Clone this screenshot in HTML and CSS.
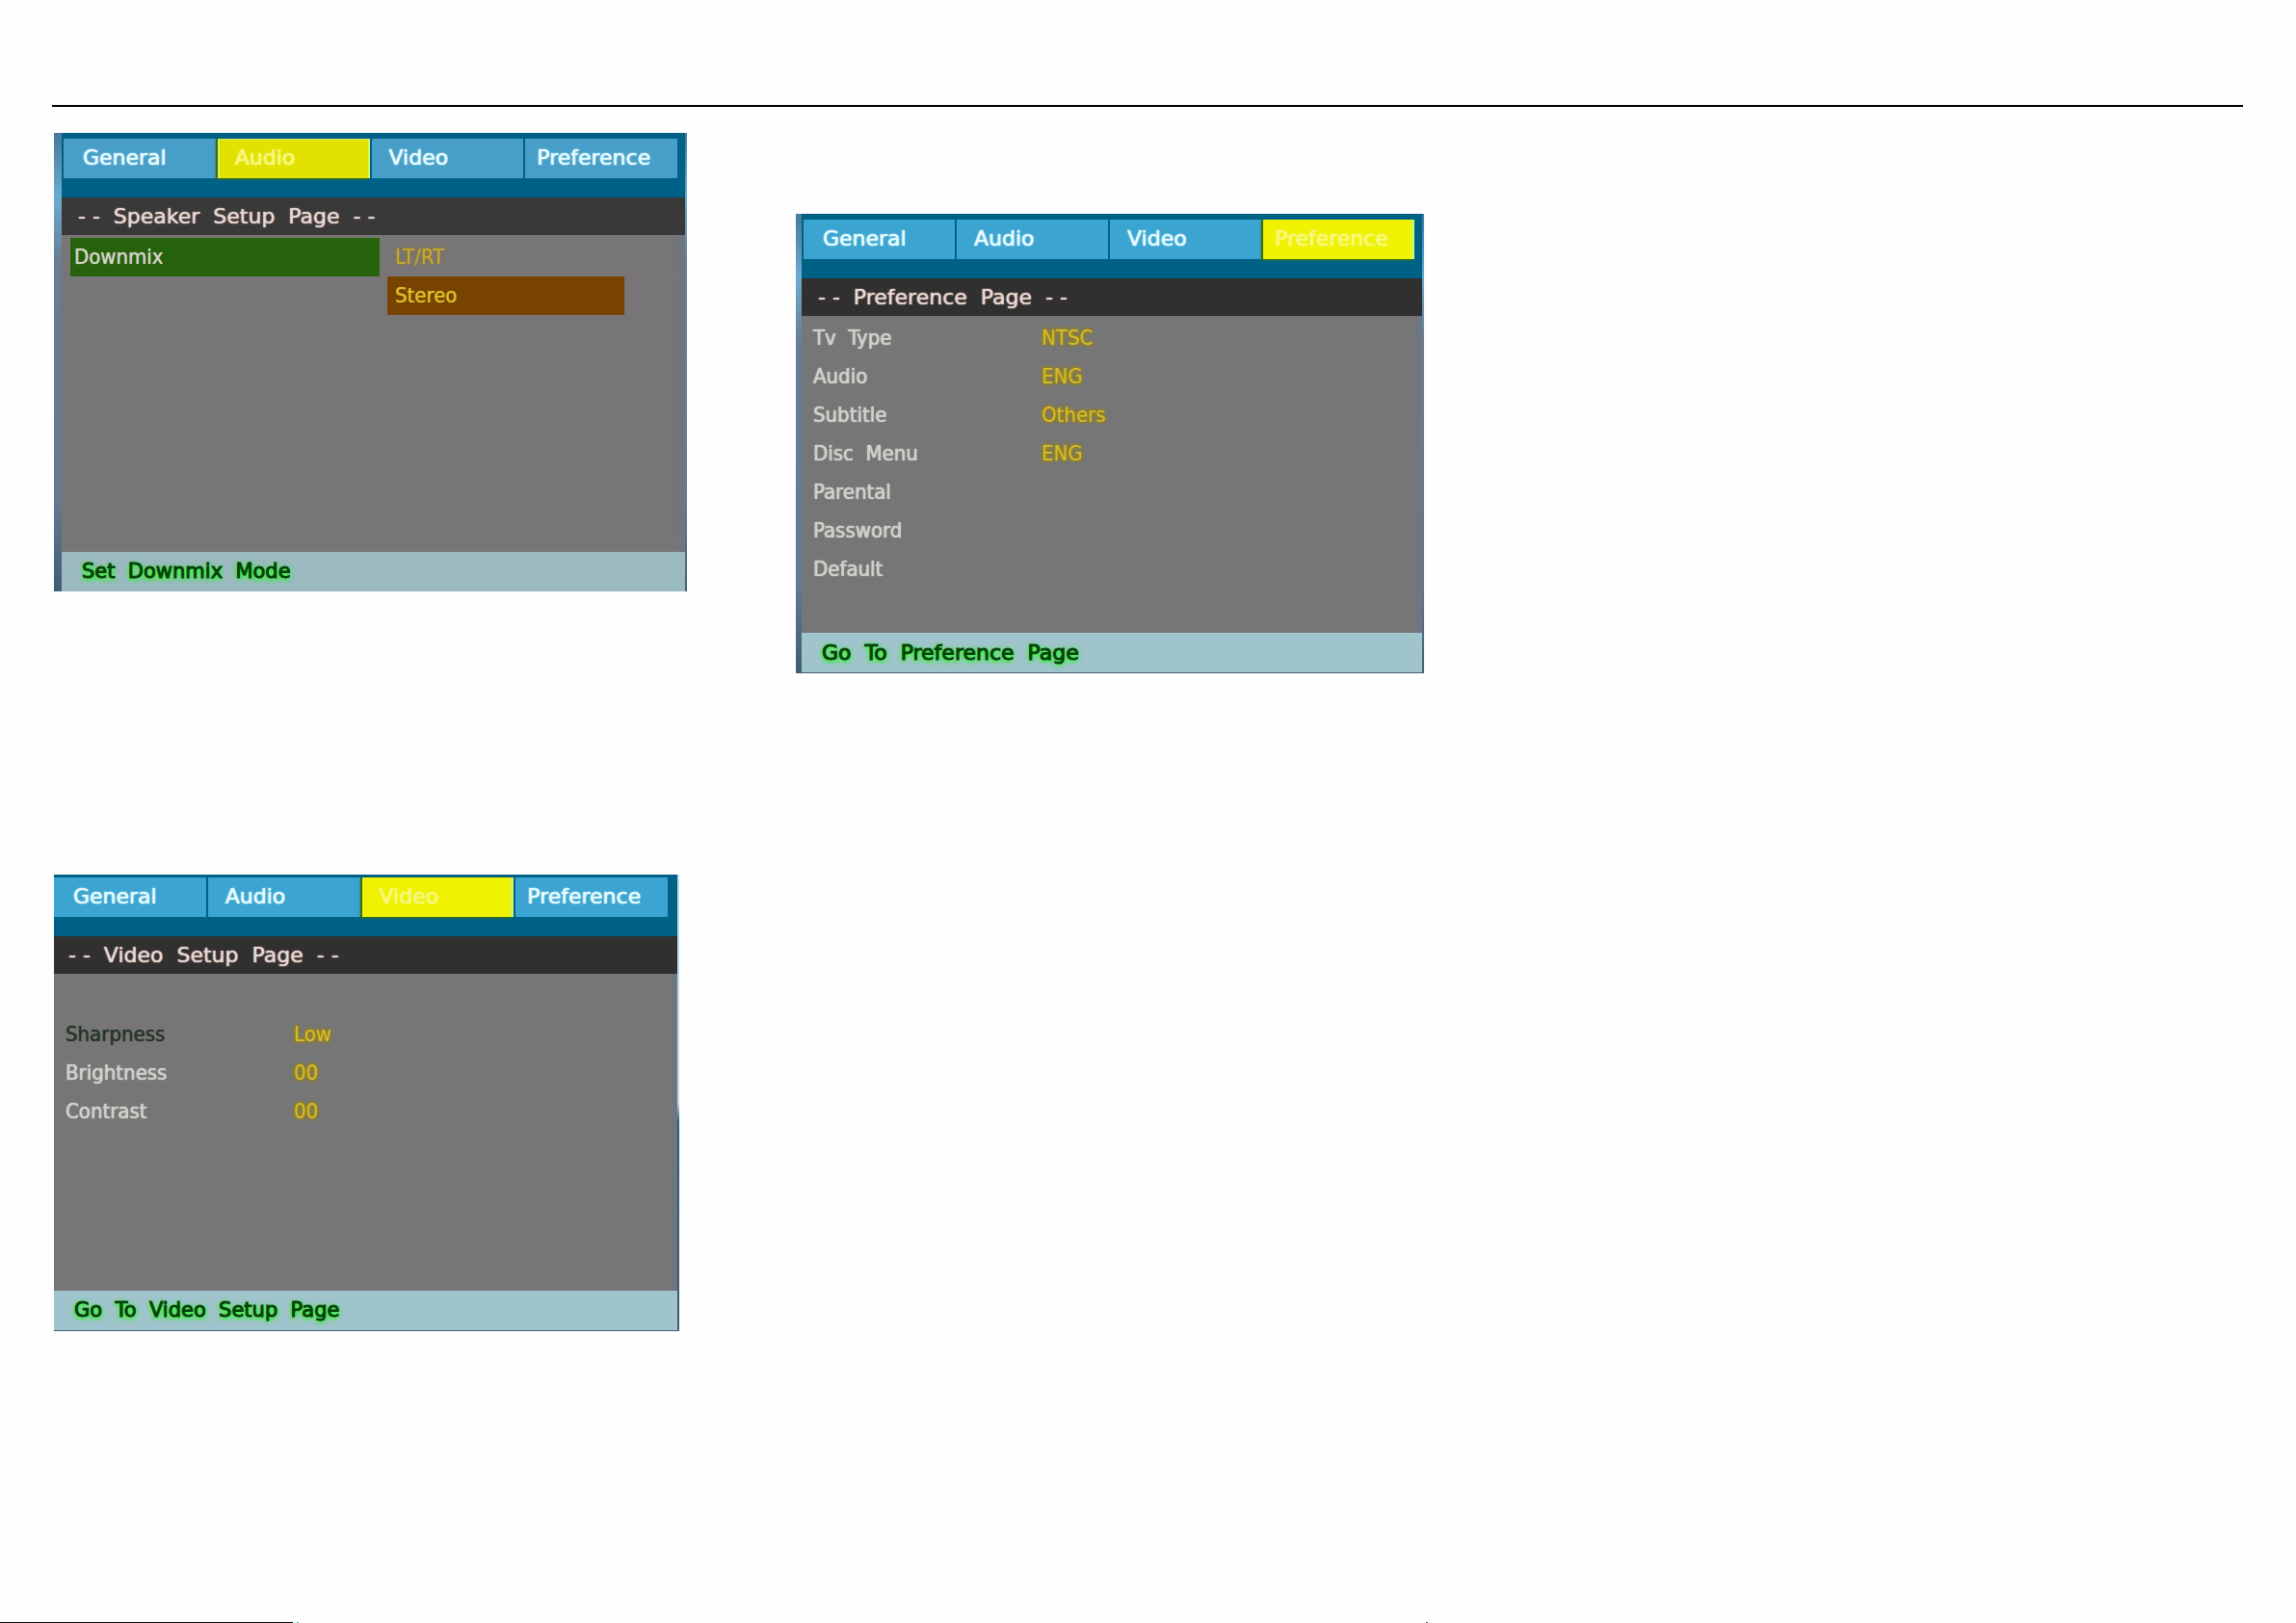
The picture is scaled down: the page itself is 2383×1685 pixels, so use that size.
FILE: index.html
```
<!DOCTYPE html>
<html lang="en">
<head>
<meta charset="utf-8">
<title>Setup pages</title>
<link rel="stylesheet" href="styles.css">
</head>
<body>
<main class="sheet">
  <hr class="rule">
  <div class="columns">
    <div class="column">
      <section class="screen speaker">
        <nav class="tabs">
          <button class="tab" type="button">General</button>
          <button class="tab active" type="button">Audio</button>
          <button class="tab" type="button">Video</button>
          <button class="tab" type="button">Preference</button>
        </nav>
        <h2 class="title">- -  Speaker  Setup  Page  - -</h2>
        <div class="content chooser">
          <div class="selected">Downmix</div>
          <div class="options">
            <button class="option" type="button">LT/RT</button>
            <button class="option current" type="button">Stereo</button>
          </div>
        </div>
        <p class="hint">Set  Downmix  Mode</p>
      </section>

      <section class="screen video">
        <nav class="tabs">
          <button class="tab" type="button">General</button>
          <button class="tab" type="button">Audio</button>
          <button class="tab active" type="button">Video</button>
          <button class="tab" type="button">Preference</button>
        </nav>
        <h2 class="title">- -  Video  Setup  Page  - -</h2>
        <div class="content">
          <table class="settings">
            <tr class="focused"><th scope="row">Sharpness</th><td>Low</td></tr>
            <tr><th scope="row">Brightness</th><td>00</td></tr>
            <tr><th scope="row">Contrast</th><td>00</td></tr>
          </table>
        </div>
        <p class="hint">Go  To  Video  Setup  Page</p>
      </section>
    </div>

    <div class="column second">
      <section class="screen preference">
        <nav class="tabs">
          <button class="tab" type="button">General</button>
          <button class="tab" type="button">Audio</button>
          <button class="tab" type="button">Video</button>
          <button class="tab active" type="button">Preference</button>
        </nav>
        <h2 class="title">- -  Preference  Page  - -</h2>
        <div class="content">
          <table class="settings">
            <tr><th scope="row">Tv  Type</th><td>NTSC</td></tr>
            <tr><th scope="row">Audio</th><td>ENG</td></tr>
            <tr><th scope="row">Subtitle</th><td>Others</td></tr>
            <tr><th scope="row">Disc  Menu</th><td>ENG</td></tr>
            <tr><th scope="row">Parental</th><td></td></tr>
            <tr><th scope="row">Password</th><td></td></tr>
            <tr><th scope="row">Default</th><td></td></tr>
          </table>
        </div>
        <p class="hint">Go  To  Preference  Page</p>
      </section>
    </div>
  </div>
  <div class="trim"><span class="trim-line"></span><span class="trim-dot green"></span><span class="trim-dot"></span></div>
</main>
</body>
</html>
```
FILE: styles.css
```
* { box-sizing: border-box; }

body {
  margin: 0;
  background: #fefefe;
  font-family: "DejaVu Sans", Verdana, sans-serif;
}

.sheet {
  display: flex;
  flex-direction: column;
  min-height: 100vh;
}

.rule {
  width: auto;
  height: 2px;
  margin: 109px 55px 27px 54px;
  border: 0;
  background: #000;
}

.columns {
  display: grid;
  grid-template-columns: 657fr 652fr 736fr;
  column-gap: 113px;
  padding: 0 56px;
}

.column {
  display: flex;
  flex-direction: column;
  gap: 294px;
}

.second { padding-top: 84px; }

.screen {
  --bar: #006186;
  --tab: #3ba4d1;
  --title: #303030;
  --body: #767676;
  --hint: #a0c4cb;
  --edge: 6px;
  display: flex;
  flex-direction: column;
  padding: 0 2px 0 var(--edge);
  background: linear-gradient(#47799a, #6cabd0 14%, #687d92 28%, #657991 80%, #405d75);
}

.speaker {
  --tab: #479fc9;
  --title: #393939;
  --body: #777575;
  --hint: #9bbac0;
  --edge: 8px;
}

.video {
  --edge: 0px;
  margin-right: 8px;
  background: linear-gradient(#b6def0, #c0dcef 50%, #365c7a 54%, #405d75);
}

.preference { padding-bottom: 1px; }

.tabs {
  display: grid;
  grid-template-columns: repeat(4, 1fr);
  column-gap: 2px;
  padding: 6px 8px 20px 2px;
  background: var(--bar);
}

.video .tabs {
  padding-top: 3px;
  padding-right: 10px;
  padding-left: 0;
}

.tab {
  height: 41px;
  margin: 0;
  padding: 0 0 2px 18px;
  border: 0;
  background: var(--tab);
  color: #e6fcff;
  font: 22px/39px "DejaVu Sans", Verdana, sans-serif;
  text-align: left;
  text-shadow: 0 0 1px #e6fcff, 0 0 2px #b8eaf5;
}

.tab:first-child { padding-left: 20px; }

.tab:last-child { padding-left: 12px; }

.tab.active {
  background: #eff200;
  box-shadow: inset -3px 0 #c8f666, -2px 1px 2px #4c7000;
  color: #f8f87e;
  text-shadow: 0 0 1px #f8f87e, 0 0 2px #f6f67c;
}

.speaker .tab.active {
  background: #e1e200;
  box-shadow: inset -2px 0 #d4fa70, inset 2px 1px #d4f060, -2px 1px 2px #4c7000;
}

.title {
  margin: 0;
  padding-left: 17px;
  background: var(--title);
  color: #e6d8d6;
  font-size: 22px;
  font-weight: 400;
  line-height: 39px;
  white-space: pre;
  text-shadow: 0 0 1px #e6d8d6, 0 0 2px #94705c;
}

.video .title { padding-left: 15px; }

.content {
  min-height: 329px;
  padding: 3px 0 0 12px;
  background: linear-gradient(90deg, var(--body) 98%, #6d7681);
  font: 22px/40px "DejaVu Sans Condensed", "DejaVu Sans", sans-serif;
}

.settings {
  border-collapse: collapse;
  white-space: pre;
}

.settings th {
  width: 237px;
  height: 40px;
  padding: 0;
  color: #d0d0ca;
  font-weight: 400;
  text-align: left;
  text-shadow: 0 0 1px #d0d0ca, 0 0 1px #d0d0ca;
}

.settings td {
  padding: 0;
  color: #d2bc38;
  text-shadow: 0 0 3px #a08800, 0 0 3px #a08800, 0 0 4px #a08800;
}

.settings .focused th {
  color: #263328;
  text-shadow: 0 0 1px #263328;
}

.video .content { padding-top: 43px; }

.chooser {
  display: flex;
  align-items: flex-start;
  gap: 8px;
  padding-left: 9px;
}

.selected {
  width: 321px;
  height: 40px;
  padding-left: 4px;
  background: #25620b;
  color: #d6d4c8;
  line-height: 39px;
  text-shadow: 0 0 1px #d6d4c8;
}

.options {
  display: flex;
  flex-direction: column;
  width: 246px;
}

.option {
  height: 40px;
  padding: 0 0 0 8px;
  border: 0;
  background: none;
  color: #c9a92b;
  font: inherit;
  line-height: 38px;
  text-align: left;
  text-shadow: 0 0 3px #a08420;
}

.option.current {
  background: #784200;
  color: #d9c02c;
  text-shadow: 0 0 1px #d9c02c;
}

.hint {
  margin: 0;
  padding-left: 21px;
  background: var(--hint);
  color: #063f0c;
  font-size: 22px;
  line-height: 41px;
  white-space: pre;
  -webkit-text-stroke: 1px #063f0c;
  text-shadow: 0 1px 4px #39f339, 0 1px 4px #39f339, 0 2px 5px #39f339;
}

.speaker .hint,
.video .hint { font-size: 21px; }

.video .hint { border-bottom: 1px solid #405d75; }

.trim {
  display: flex;
  height: 1px;
  margin-top: auto;
}

.trim-line {
  flex: 0 0 304px;
  background: #000;
}

.trim-dot {
  width: 2px;
  margin-left: 1170px;
  background: #2c6478;
}

.trim-dot.green {
  margin-left: 4px;
  background: #28d860;
}
```
